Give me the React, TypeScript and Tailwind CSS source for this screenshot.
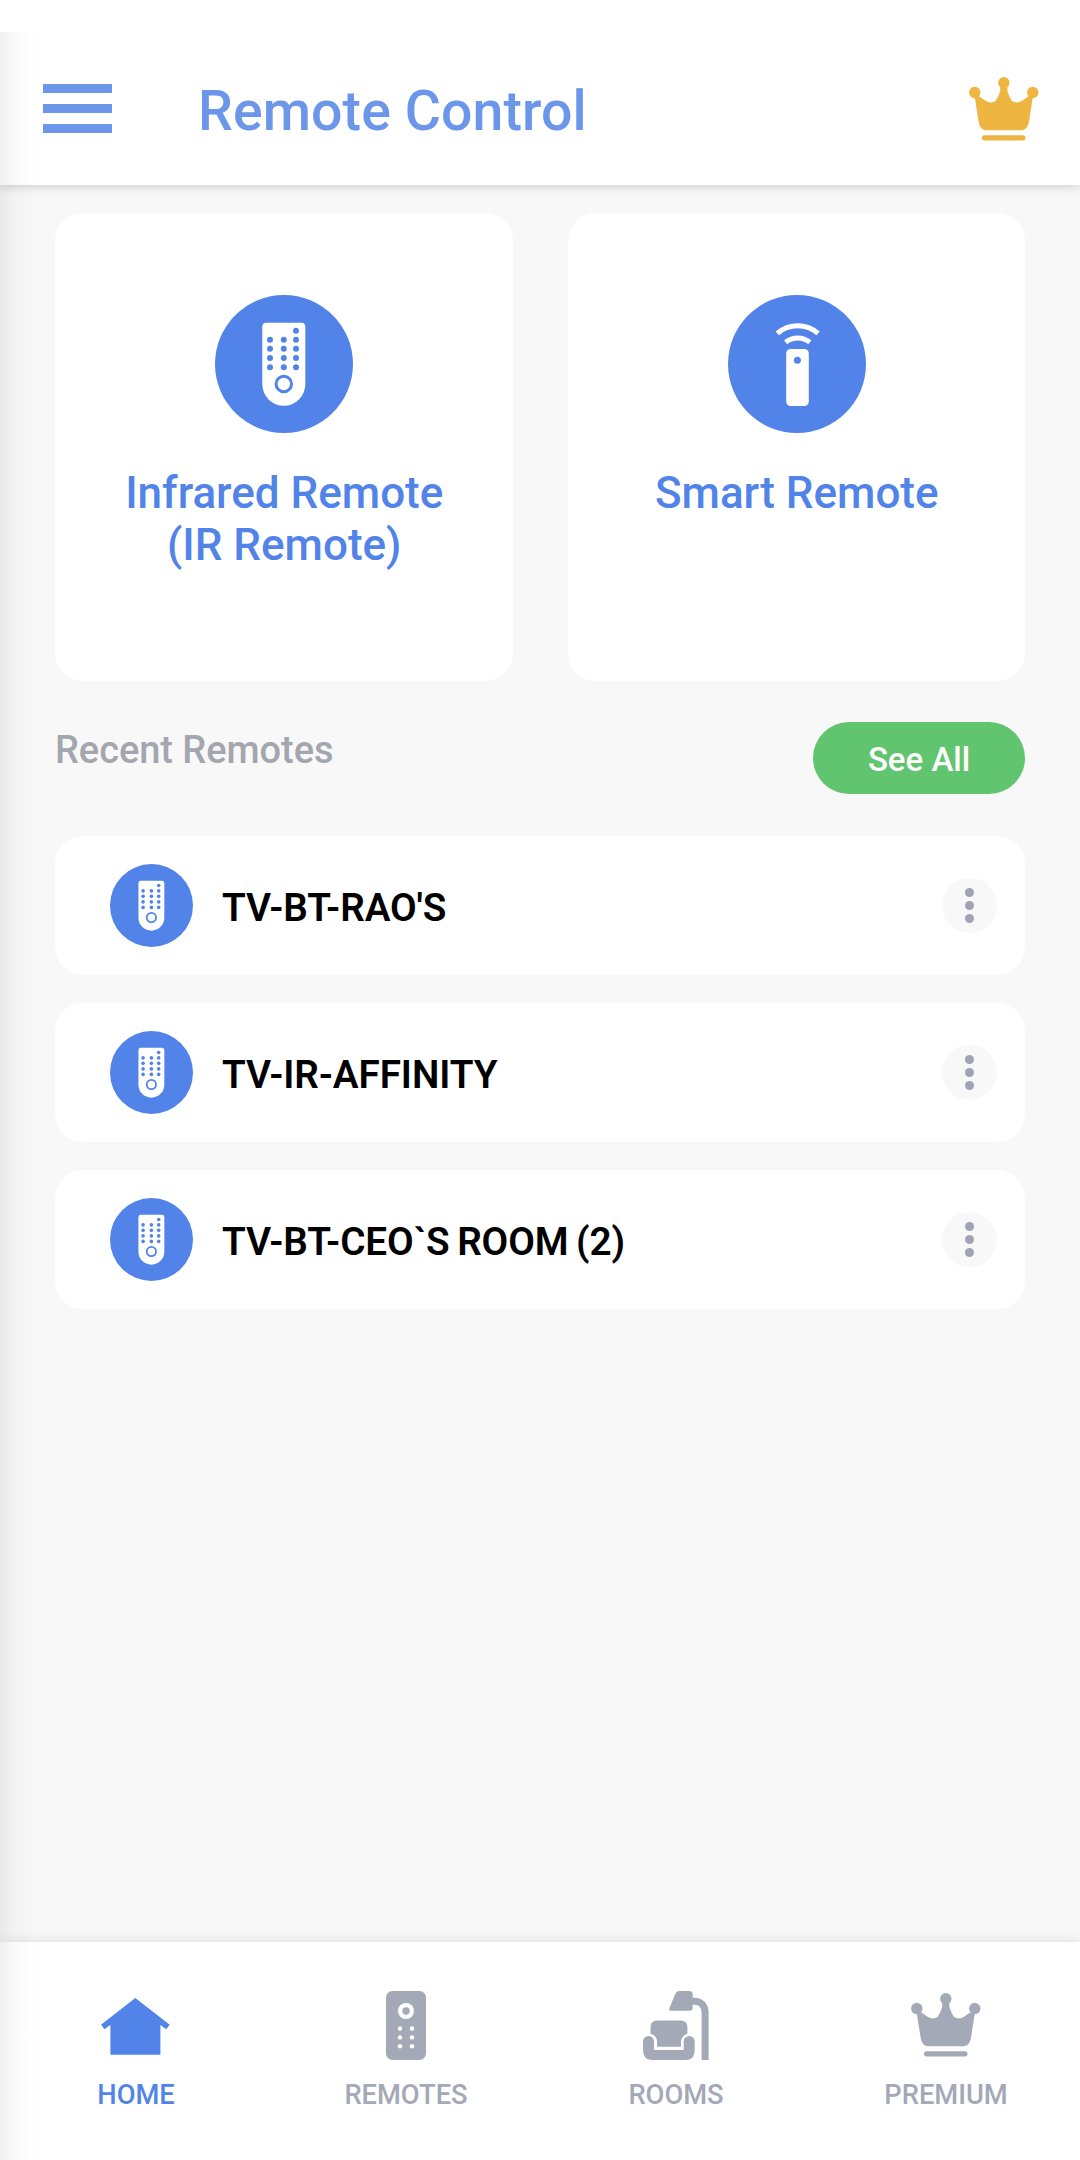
import type { ReactNode } from 'react';

function Crown({ className }: { className: string }) {
  return (
    <svg viewBox="0 0 70 64" fill="currentColor" className={className}>
      <circle cx="5.8" cy="15.5" r="5.7" />
      <circle cx="34.8" cy="5.8" r="5.7" />
      <circle cx="63.8" cy="15.5" r="5.7" />
      <path d="M5.6 19L10.6 19.6L16.5 23.8Q22 27 26.8 23.8Q29.5 19.5 31.2 14V9H38.4V14Q40.1 19.5 42.8 23.8Q47.6 27 53.1 23.8L59 19.6L64 19L60.3 42.7C59.5 49 57.6 53.3 51 53.3H18.6C12 53.3 10.1 49 9.3 42.7Z" />
      <rect x="12.9" y="58.2" width="43.6" height="5.2" rx="2.6" />
    </svg>
  );
}

const DOT_ROWS = [44.7, 53.8, 63, 72.2];
const DOT_COLUMNS = [55, 68.8, 81];

function InfraredBadge({ className }: { className: string }) {
  return (
    <svg viewBox="0 0 138 138" className={className}>
      <circle cx="69" cy="69" r="69" fill="#5283e9" />
      <path d="M51.3 27.7H86.3A4 4 0 0 1 90.3 31.7V89.3A21.5 21.5 0 0 1 47.3 89.3V31.7A4 4 0 0 1 51.3 27.7Z" fill="#fff" />
      <circle cx="81" cy="35.7" r="3" fill="#5283e9" />
      {DOT_ROWS.map((y) => DOT_COLUMNS.map((x) => <circle key={`${x}-${y}`} cx={x} cy={y} r="3" fill="#5283e9" />))}
      <circle cx="68.8" cy="89" r="7.7" fill="none" stroke="#5283e9" strokeWidth="3" />
    </svg>
  );
}

function SmartBadge({ className }: { className: string }) {
  return (
    <svg viewBox="0 0 138 138" className={className}>
      <circle cx="69" cy="69" r="69" fill="#5283e9" />
      <rect x="58.2" y="54" width="22.6" height="57" rx="4.5" fill="#fff" />
      <circle cx="69.4" cy="65.3" r="3.5" fill="#5283e9" />
      <g fill="none" stroke="#fff" strokeWidth="5">
        <path d="M49.3 38.3A31 31 0 0 1 90.1 38.3" />
        <path d="M57.6 47.2A19.5 19.5 0 0 1 81.8 47.2" />
      </g>
    </svg>
  );
}

function HomeIcon() {
  return (
    <svg viewBox="0 0 70 70" fill="currentColor" className="size-[70px]">
      <path d="M35.3 8L1 34.7L4.4 39.2L10.4 35V64.7H60.4V35L66.2 39.2L69.7 34.7Z" />
    </svg>
  );
}

function RemotesIcon() {
  return (
    <svg viewBox="0 0 70 70" fill="currentColor" className="size-[70px]">
      <rect x="16" y="1" width="40" height="69" rx="6.5" />
      <circle cx="36" cy="21" r="8" fill="#fff" />
      <circle cx="36" cy="21" r="3.7" />
      {[38.5, 47.4, 56.3].map((y) => (
        <g key={y} fill="#fff">
          <circle cx="30" cy={y} r="2.2" />
          <circle cx="42" cy={y} r="2.2" />
        </g>
      ))}
    </svg>
  );
}

function RoomsIcon() {
  return (
    <svg viewBox="0 0 70 70" fill="currentColor" className="size-[70px]">
      <path d="M39.5 1H49.5Q52.7 1 52.7 4V17.7Q52.7 20.7 49.7 20.7H31Q28.6 20.7 29.5 18L35.2 4Q36.5 1 39.5 1Z" />
      <path d="M51 11.2H54.5C61 11.2 65.1 15.5 65.1 23V70" fill="none" stroke="currentColor" strokeWidth="7" />
      <path d="M17.5 30.4H40.5Q47.4 30.4 47.4 37V43.8Q41.5 46 41 51.5V56.8H17.1V51.5Q16.5 45.5 10.5 43.8V37Q10.5 30.4 17.5 30.4Z" />
      <path d="M3 51.5A5.5 5.5 0 0 1 14 51.5V60H43.7V51.5A5.5 5.5 0 0 1 54.7 51.5V60Q54.7 70 45.5 70H12.5Q3 70 3 60Z" />
    </svg>
  );
}

function RemoteCard({ icon, children }: { icon: ReactNode; children: ReactNode }) {
  return (
    <button className="flex h-[468px] flex-1 flex-col items-center rounded-[28px] bg-white pt-[82px]">
      {icon}
      <span className="mt-[34px] pl-px text-center text-[44px] leading-[52px] font-medium text-[#5283e9]">{children}</span>
    </button>
  );
}

function RemoteRow({ name }: { name: string }) {
  return (
    <li className="flex h-[139px] items-center rounded-[28px] bg-white pr-[28px] pl-[55px]">
      <InfraredBadge className="size-[83px]" />
      <span className="ml-[29px] flex-1 pt-[5px] text-[38.7px] leading-[46px] font-semibold tracking-[-0.1px] text-black [word-spacing:-2px]">{name}</span>
      <button className="flex size-[55px] flex-col items-center justify-center gap-[4px] rounded-full bg-[#f8f8f9]">
        <i className="size-[9px] rounded-full bg-[#a0a3b3]" />
        <i className="size-[9px] rounded-full bg-[#a0a3b3]" />
        <i className="size-[9px] rounded-full bg-[#a0a3b3]" />
      </button>
    </li>
  );
}

function NavItem({ icon, label, active = false }: { icon: ReactNode; label: string; active?: boolean }) {
  return (
    <button className={`flex flex-1 flex-col items-center pt-[48px] ${active ? 'text-[#5283e9]' : 'text-[#a3a9b7]'}`}>
      <span className="flex h-[70px] items-center">{icon}</span>
      <span className="mt-[19px] pl-[2px] text-[27.3px] leading-[32px] font-medium">{label}</span>
    </button>
  );
}

const RECENT = ["TV-BT-RAO'S", 'TV-IR-AFFINITY', 'TV-BT-CEO`S ROOM (2)'];

export default function App() {
  return (
    <div className="relative flex h-[2160px] w-[1080px] flex-col overflow-hidden bg-[#f8f8f8] font-[Roboto,sans-serif]">
      <header className="z-10 flex h-[185px] items-center bg-white px-[43px] pt-[32px] shadow-[0_1px_10px_rgba(0,0,0,0.2)]">
        <button className="flex w-[69px] flex-col gap-[11px]">
          <i className="h-[9px] bg-[#6b96ea]" />
          <i className="h-[9px] bg-[#6b96ea]" />
          <i className="h-[9px] bg-[#6b96ea]" />
        </button>
        <h1 className="ml-[86px] flex-1 pt-[7px] text-[55.4px] leading-[64px] font-medium tracking-[0.1px] text-[#6b96ea]">Remote Control</h1>
        <Crown className="-mr-[2px] h-[64px] w-[70px] text-[#eeb640]" />
      </header>

      <main className="flex flex-1 flex-col px-[55px] pt-[28px]">
        <section className="flex gap-[55px]">
          <RemoteCard icon={<InfraredBadge className="size-[138px]" />}>
            Infrared Remote
            <br />
            (IR Remote)
          </RemoteCard>
          <RemoteCard icon={<SmartBadge className="ml-[2px] size-[138px]" />}>Smart Remote</RemoteCard>
        </section>

        <section className="mt-[41px] flex justify-between">
          <h2 className="pt-[5px] text-[38px] leading-[46px] font-medium tracking-[-0.05px] text-[#a3a6ae]">Recent Remotes</h2>
          <button className="h-[72px] w-[212px] rounded-full bg-[#61c56f] pt-[3px] text-[33px] leading-[40px] font-medium text-white">See All</button>
        </section>

        <ul className="mt-[42px] flex flex-col gap-[28px]">
          {RECENT.map((name) => (
            <RemoteRow key={name} name={name} />
          ))}
        </ul>
      </main>

      <nav className="z-10 flex h-[218px] bg-white shadow-[0_0_12px_rgba(0,0,0,0.12)]">
        <NavItem active icon={<HomeIcon />} label="HOME" />
        <NavItem icon={<RemotesIcon />} label="REMOTES" />
        <NavItem icon={<RoomsIcon />} label="ROOMS" />
        <NavItem icon={<Crown className="ml-[2px] h-[64px] w-[70px]" />} label="PREMIUM" />
      </nav>

      <div className="pointer-events-none absolute top-[32px] bottom-0 left-0 z-20 w-[38px] bg-linear-to-r from-black/6 via-black/2 via-40% to-transparent" />
    </div>
  );
}
